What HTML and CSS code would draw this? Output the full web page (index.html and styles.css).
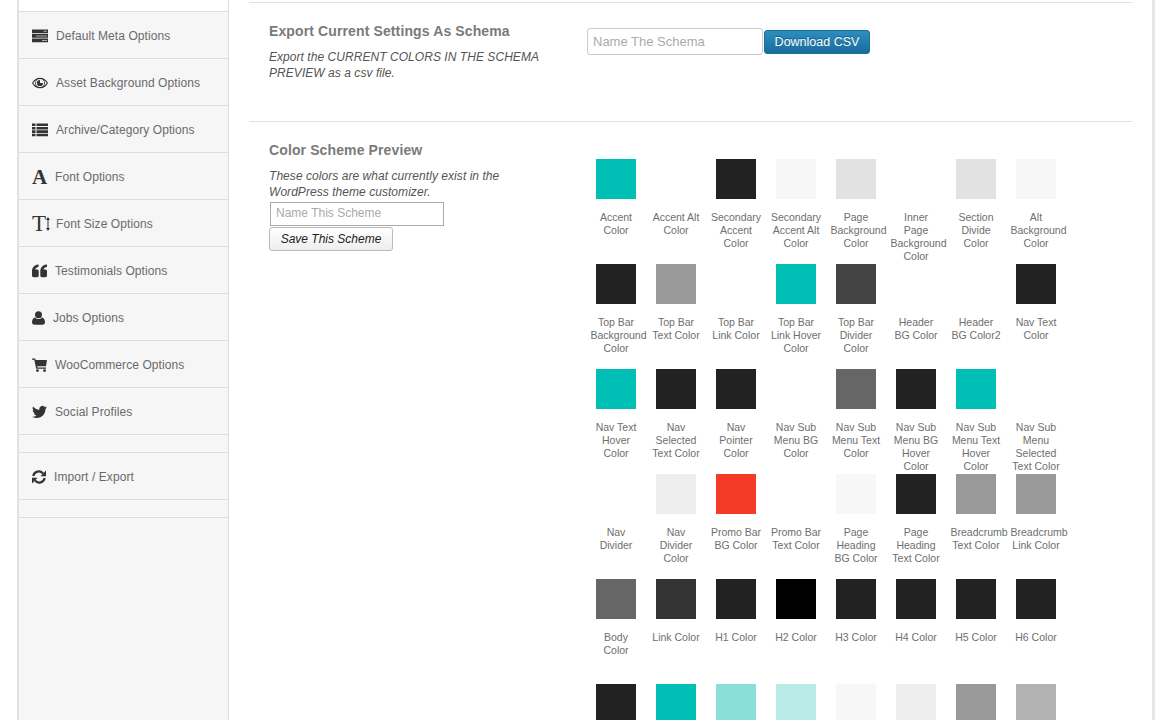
FILE: index.html
```html
<!DOCTYPE html>
<html lang="en">
<head>
    <meta charset="UTF-8">
    <title>Theme Options - Import / Export</title>
    <link rel="stylesheet" href="styles.css">
</head>
<body>
<div class="page">
    <div class="sidebar">
        <div class="side-top"></div>
        <a class="side-item">
            <svg width="16" height="14" viewBox="0 0 16 14"><path d="M0 .5h16v3.800H0zM0 5h16v3.800H0zM0 9.500h16v3.800H0z"/><path fill="#aaa" d="M11.500 1.800h3.500v1h-3.500zM4 6.400h11v1H4zM10 10.900h5v1h-5z"/></svg>
            Default Meta Options
        </a>
        <a class="side-item">
            <svg width="16" height="14" viewBox="0 0 16 14"><path fill-rule="evenodd" d="M8 1.700c3.400 0 6.300 2 8 5.300-1.700 3.300-4.600 5.300-8 5.300S1.700 10.300 0 7c1.700-3.300 4.600-5.300 8-5.300zM8 2.900a4 4 0 1 0 0 8.200 4 4 0 0 0 0-8.200zM3.900 4.200C2.800 4.800 1.900 5.800 1.200 7c.7 1.200 1.600 2.200 2.700 2.800a5.200 5.200 0 0 1 0-5.600zM12.100 4.200a5.200 5.200 0 0 1 0 5.600c1.100-.6 2-1.600 2.700-2.800-.7-1.200-1.600-2.200-2.700-2.800z"/><path d="M8 3.900a3.100 3.100 0 1 0 3.100 3.100H8z"/></svg>
            Asset Background Options
        </a>
        <a class="side-item">
            <svg width="16" height="14" viewBox="0 0 16 14"><path d="M0 .5h3.500v2.600H0zM4.500 .5H16v2.600H4.500zM0 3.900h3.500v2.600H0zM4.500 3.900H16v2.600H4.500zM0 7.300h3.500v2.600H0zM4.500 7.300H16v2.600H4.500zM0 10.700h3.500v2.600H0zM4.500 10.700H16v2.600H4.500z"/></svg>
            Archive/Category Options
        </a>
        <a class="side-item">
            <span class="glyph">A</span>
            Font Options
        </a>
        <a class="side-item">
            <span class="glyph glyph-t">T<svg width="4" height="14" viewBox="0 0 4 14"><path d="M2 0l2 3H2.500v8H4l-2 3-2-3h1.500V3H0z"/></svg></span>
            Font Size Options
        </a>
        <a class="side-item">
            <svg width="15" height="14" viewBox="0 0 15 14"><path d="M0 7.500C0 3.600 2.200 1 6 .5c.4 0 .6.200.6.500v1.500c0 .3-.2.500-.5.600C4.300 3.500 3.300 4.400 3.300 5.600H5c1 0 1.700.7 1.700 1.700v4.300c0 1-.7 1.700-1.700 1.700H1.700C.7 13.300 0 12.600 0 11.600zM8.300 7.500c0-3.900 2.200-6.500 6-7 .4 0 .7.200.7.500v1.500c0 .3-.2.500-.5.600-1.900.4-2.900 1.300-2.900 2.500h1.700c1 0 1.700.7 1.700 1.700v4.300c0 1-.7 1.700-1.700 1.700H10c-1 0-1.700-.7-1.700-1.700z"/></svg>
            Testimonials Options
        </a>
        <a class="side-item">
            <svg width="13" height="14" viewBox="0 0 13 14"><circle cx="6.500" cy="3.700" r="3.500"/><path d="M0 11.300C0 8.600 1.300 6.800 3 6.400c1 1 2.200 1.500 3.500 1.500S9 7.400 10 6.400c1.700.4 3 2.200 3 4.900 0 1.500-1 2.400-2.500 2.400h-8C1 13.700 0 12.800 0 11.300z"/></svg>
            Jobs Options
        </a>
        <a class="side-item">
            <svg width="15" height="14" viewBox="0 0 15 14"><path d="M0 .5h3.200l.5 1.500H15l-1 6.300H5.200l.3 1.200H14v1.300H4.200L2.300 1.800H0z"/><circle cx="5.500" cy="12.600" r="1.400"/><circle cx="12.500" cy="12.600" r="1.400"/></svg>
            WooCommerce Options
        </a>
        <a class="side-item">
            <svg width="15" height="14" viewBox="0 0 24 22"><path d="M23.953 3.570a10 10 0 0 1-2.825.775 4.958 4.958 0 0 0 2.163-2.723c-.951.555-2.005.959-3.127 1.184a4.920 4.920 0 0 0-8.384 4.482C7.690 7.095 4.067 5.130 1.640 2.162a4.822 4.822 0 0 0-.666 2.475c0 1.710.870 3.213 2.188 4.096a4.904 4.904 0 0 1-2.228-.616v.060a4.923 4.923 0 0 0 3.946 4.827 4.996 4.996 0 0 1-2.212.085 4.936 4.936 0 0 0 4.604 3.417 9.867 9.867 0 0 1-6.102 2.105c-.390 0-.779-.023-1.170-.067a13.995 13.995 0 0 0 7.557 2.209c9.053 0 13.998-7.496 13.998-13.985 0-.210 0-.420-.015-.630A9.935 9.935 0 0 0 24 3.590z"/></svg>
            Social Profiles
        </a>
        <div class="side-gap"></div>
        <a class="side-item">
            <svg width="14" height="14" viewBox="0 0 14 14"><path fill="none" stroke="#333" stroke-width="2.200" d="M1.300 6A5.600 5.600 0 0 1 11 3.400M12.700 8A5.600 5.600 0 0 1 3 10.600"/><path d="M14 .6v5.600H8.400zM0 13.400V7.800h5.600z"/></svg>
            Import / Export
        </a>
        <div class="side-gap"></div>
    </div>

    <div class="main">
        <div class="section section-export">
            <div class="intro">
                <h4>Export Current Settings As Schema</h4>
                <p>Export the CURRENT COLORS IN THE SCHEMA PREVIEW as a csv file.</p>
            </div>
            <div class="export-form">
                <input class="schema-input" type="text" placeholder="Name The Schema">
                <button class="btn-blue">Download CSV</button>
            </div>
        </div>

        <div class="section">
            <div class="intro">
                <h4>Color Scheme Preview</h4>
                <p>These colors are what currently exist in the WordPress theme customizer.</p>
                <input class="scheme-input" type="text" placeholder="Name This Scheme">
                <button class="btn-save">Save This Scheme</button>
            </div>
            <div class="colors">
                <div class="color"><i class="teal"></i>Accent Color</div>
                <div class="color"><i></i>Accent Alt Color</div>
                <div class="color"><i class="ink"></i>Secondary Accent Color</div>
                <div class="color"><i class="pale"></i>Secondary Accent Alt Color</div>
                <div class="color"><i class="light"></i>Page Background Color</div>
                <div class="color"><i></i>Inner Page Background Color</div>
                <div class="color"><i class="light"></i>Section Divide Color</div>
                <div class="color"><i class="pale"></i>Alt Background Color</div>

                <div class="color"><i class="ink"></i>Top Bar Background Color</div>
                <div class="color"><i class="grey"></i>Top Bar Text Color</div>
                <div class="color"><i></i>Top Bar Link Color</div>
                <div class="color"><i class="teal"></i>Top Bar Link Hover Color</div>
                <div class="color"><i class="char"></i>Top Bar Divider Color</div>
                <div class="color"><i></i>Header BG Color</div>
                <div class="color"><i></i>Header BG Color2</div>
                <div class="color"><i class="ink"></i>Nav Text Color</div>

                <div class="color"><i class="teal"></i>Nav Text Hover Color</div>
                <div class="color"><i class="ink"></i>Nav Selected Text Color</div>
                <div class="color"><i class="ink"></i>Nav Pointer Color</div>
                <div class="color"><i></i>Nav Sub Menu BG Color</div>
                <div class="color"><i class="slate"></i>Nav Sub Menu Text Color</div>
                <div class="color"><i class="ink"></i>Nav Sub Menu BG Hover Color</div>
                <div class="color"><i class="teal"></i>Nav Sub Menu Text Hover Color</div>
                <div class="color"><i></i>Nav Sub Menu Selected Text Color</div>

                <div class="color"><i></i>Nav Divider</div>
                <div class="color"><i class="mist"></i>Nav Divider Color</div>
                <div class="color"><i class="red"></i>Promo Bar BG Color</div>
                <div class="color"><i></i>Promo Bar Text Color</div>
                <div class="color"><i class="pale"></i>Page Heading BG Color</div>
                <div class="color"><i class="ink"></i>Page Heading Text Color</div>
                <div class="color"><i class="grey"></i>Breadcrumb Text Color</div>
                <div class="color"><i class="grey"></i>Breadcrumb Link Color</div>

                <div class="color"><i class="slate"></i>Body Color</div>
                <div class="color"><i class="coal"></i>Link Color</div>
                <div class="color"><i class="ink"></i>H1 Color</div>
                <div class="color"><i class="black"></i>H2 Color</div>
                <div class="color"><i class="ink"></i>H3 Color</div>
                <div class="color"><i class="ink"></i>H4 Color</div>
                <div class="color"><i class="ink"></i>H5 Color</div>
                <div class="color"><i class="ink"></i>H6 Color</div>

                <div class="color"><i class="ink"></i></div>
                <div class="color"><i class="teal"></i></div>
                <div class="color"><i class="teal-2"></i></div>
                <div class="color"><i class="teal-3"></i></div>
                <div class="color"><i class="pale"></i></div>
                <div class="color"><i class="mist"></i></div>
                <div class="color"><i class="grey"></i></div>
                <div class="color"><i class="silver"></i></div>
            </div>
        </div>
    </div>
</div>
</body>
</html>
```

FILE: styles.css
```css
*{box-sizing:border-box;}
html,body{margin:0;padding:0;height:720px;overflow:hidden;background:#fff;}
body{font-family:"Liberation Sans",Arial,sans-serif;color:#666;}
.page{display:flex;height:720px;margin:0 15px 0 17px;border-left:2px solid #e2e2e2;border-right:3px solid #e6e6e6;}

/* sidebar */
.sidebar{width:210px;flex:none;background:#f6f6f6;border-right:1px solid #ddd;}
.side-top{height:12px;background:#fff;border-bottom:1px solid #ddd;}
.side-item{display:flex;align-items:center;gap:8px;height:47px;padding:2px 0 0 13px;font-size:12px;letter-spacing:.08px;color:#6a6a6a;border-bottom:1px solid #ddd;}
.side-item svg{flex:none;fill:#333;}
.side-gap{height:18px;border-bottom:1px solid #ddd;}
.glyph{display:flex;align-items:center;width:15px;height:16px;font:bold 21px/16px "Liberation Serif",serif;color:#333;}
.glyph-t{width:16px;font-weight:normal;font-size:23px;gap:0;}

/* main column */
.main{flex:1;padding:2px 20px 0 20px;}
.section{display:flex;border-top:1px solid #e2e2e2;}
.section-export{height:119px;}
.intro{width:337px;flex:none;padding:19px 0 0 20px;}
.intro h4{margin:0 0 9px;font-size:14px;line-height:18px;font-weight:bold;letter-spacing:.12px;color:#7a7a7a;}
.intro p{margin:0;width:280px;font-size:12px;line-height:16px;font-style:italic;letter-spacing:.05px;color:#555;}
.export-form{display:flex;align-items:center;height:27px;margin:25px 0 0 1px;}
.schema-input{width:176px;height:27px;padding:0 5px;font:13px "Liberation Sans",sans-serif;border:1px solid #ccc;border-radius:3px;background:#fff;}
.schema-input::placeholder,.scheme-input::placeholder{color:#aaa;opacity:1;}
.btn-blue{width:106px;height:24px;margin-left:1px;padding:0;font:12.5px "Liberation Sans",sans-serif;color:#fff;text-shadow:0 -1px 0 #14597f;border:1px solid #1b6d9a;border-radius:3px;background:linear-gradient(#2b8fc0,#1a6c9b);}
.scheme-input{display:block;width:174px;height:24px;margin:2px 0 1px 1px;padding:0 5px 2px;font:12px "Liberation Sans",sans-serif;border:1px solid #aaa;background:#fff;}
.btn-save{display:block;width:124px;height:24px;padding:0;font:italic 12px "Liberation Sans",sans-serif;color:#222;border:1px solid #bbb;border-radius:3px;background:linear-gradient(#fff,#eee);}

/* swatches */
.colors{display:grid;grid-template-columns:repeat(8,60px);grid-auto-rows:105px;margin-top:37px;}
.color{padding:0 4.5px;font-size:10.5px;line-height:13px;text-align:center;color:#6e6e6e;}
.color i{display:block;width:40px;height:40px;margin:0 0 12px 5.5px;}
.teal{background:#00c0b5;}
.teal-2{background:#8adfd8;}
.teal-3{background:#b8eae6;}
.ink{background:#222;}
.coal{background:#333;}
.char{background:#444;}
.slate{background:#666;}
.grey{background:#999;}
.silver{background:#b3b3b3;}
.light{background:#e2e2e2;}
.mist{background:#eee;}
.pale{background:#f7f7f7;}
.black{background:#000;}
.red{background:#f53b27;}
```
